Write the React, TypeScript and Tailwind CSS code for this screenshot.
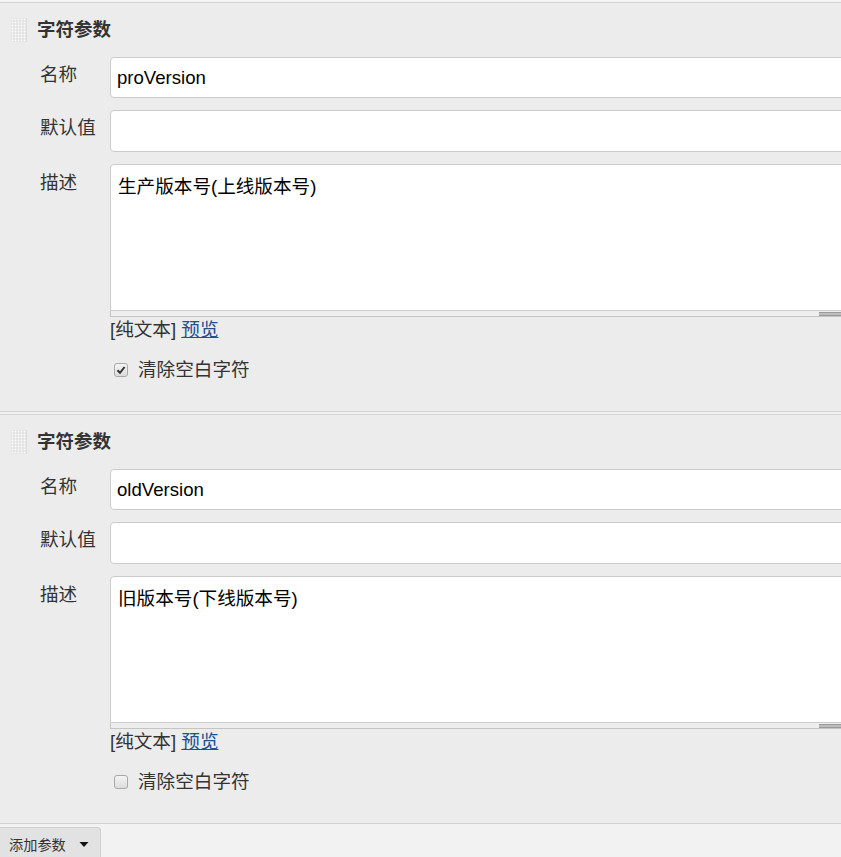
import React from "react";

const font = "font-['Liberation_Sans','Noto_Sans_CJK_SC',sans-serif]";

function Grip() {
  const cells = [];
  for (let r = 0; r < 8; r++) {
    for (let c = 0; c < 5; c++) {
      cells.push(<rect key={`${r}-${c}`} x={c * 3 + 0.5} y={r * 3 + 0.5} width={2} height={2} fill="#fbfbfb" />);
    }
  }
  return (
    <svg width="16" height="24" viewBox="0 0 16 24" className="shrink-0">
      <rect x="0" y="0" width="16" height="24" fill="#dcdcdc" />
      {cells}
    </svg>
  );
}

function Checkbox({ checked }: { checked: boolean }) {
  return (
    <span className="w-[14px] h-[14px] rounded-[3px] border border-[#a9a9a9] bg-gradient-to-b from-[#f4f4f4] to-[#dcdcdc] flex items-center justify-center shrink-0">
      {checked && (
        <svg width="10" height="10" viewBox="0 0 10 10">
          <path d="M1.5 5.2 L4 7.8 L8.6 2" stroke="#333" strokeWidth="2" fill="none" />
        </svg>
      )}
    </span>
  );
}

function Param({ name, desc, trim }: { name: string; desc: string; trim: boolean }) {
  return (
    <section className="border-y border-[#d2d2d2] bg-[#ececec] mb-[2px] pb-[28px]">
      <div className="h-[54px] flex items-center gap-[10px] pl-[11px]">
        <Grip />
        <span className="text-[18.5px] font-bold text-[#333]">字符参数</span>
      </div>
      <div className="grid grid-cols-[110px_1442px] gap-y-[12px] text-[18.6px]">
        <div className="pl-[40px] pt-[5px] leading-[26px] text-[#333]">名称</div>
        <div className="h-[41px] rounded-[4px] border border-[#cccccc] bg-white pl-[6px] flex items-center text-black">{name}</div>
        <div className="pl-[40px] pt-[5px] leading-[26px] text-[#333]">默认值</div>
        <div className="h-[42px] rounded-[4px] border border-[#cccccc] bg-white" />
        <div className="pl-[40px] pt-[6px] leading-[26px] text-[#333]">描述</div>
        <div className="flex flex-col">
          <div className="h-[147px] rounded-t-[4px] border border-[#cccccc] bg-white pl-[7px] pt-[9px] leading-[26px] text-black">{desc}</div>
          <div className="h-[6px] bg-[#eeeeee] border-x border-b border-[#c4c4c4] flex justify-center">
            <div className="w-[24px] h-[4px] mt-[1px] border-y border-[#9a9a9a] bg-[#bdbdbd]" />
          </div>
          <div className="h-[26px] leading-[26px] text-[#333]">
            [纯文本] <span className="text-[#22508c] underline">预览</span>
          </div>
          <div className="mt-[14px] h-[26px] flex items-center gap-[10px] pl-[4px] text-[#333]">
            <Checkbox checked={trim} />
            <span className="leading-[26px]">清除空白字符</span>
          </div>
        </div>
      </div>
    </section>
  );
}

export default function App() {
  return (
    <div className={`w-[841px] h-[857px] overflow-hidden bg-[#f2f2f2] ${font}`}>
      <div className="w-[1560px]">
        <div className="h-[2px] bg-[#f4f4f4]" />
        <Param name="proVersion" desc="生产版本号(上线版本号)" trim={true} />
        <Param name="oldVersion" desc="旧版本号(下线版本号)" trim={false} />
        <div className="pt-[1px]">
          <button className="h-[40px] pl-[9px] pr-[11px] bg-[#e2e2e2] border border-l-0 border-[#cfcfcf] rounded-tr-[4px] flex items-start pt-[7px] gap-[13px] text-[14.2px] text-[#333]">
            <span>添加参数</span>
            <svg width="10" height="10" viewBox="0 0 10 10" className="mt-[5px]">
              <path d="M0.5 2 L9.5 2 L5 7 Z" fill="#111" />
            </svg>
          </button>
        </div>
      </div>
    </div>
  );
}
